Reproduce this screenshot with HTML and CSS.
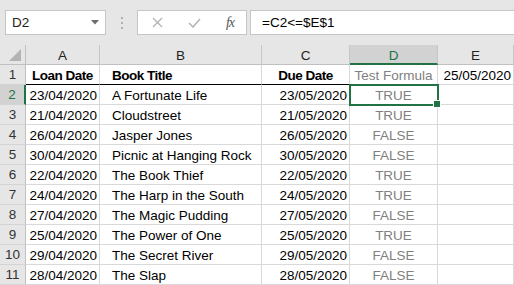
FILE: index.html
```html
<!DOCTYPE html>
<html lang="en">
<head>
    <meta charset="UTF-8">
    <title>Loan Dates</title>
    <link rel="stylesheet" href="styles.css">
</head>
<body>
    <div class="toolbar">
        <div class="name-box">
            <span>D2</span>
            <svg class="caret" width="8" height="5" viewBox="0 0 8 5"><path d="M0 0h8L4 4.5z" fill="#6d6d6d"/></svg>
        </div>
        <div class="grip"><i></i><i></i><i></i></div>
        <div class="fx-buttons">
            <svg width="11" height="11" viewBox="0 0 11 11"><path d="M1 1l9 9M10 1l-9 9" stroke="#b3b3b3" stroke-width="1.3" fill="none"/></svg>
            <svg width="13" height="10" viewBox="0 0 13 10"><path d="M1 5l4 4 7-8" stroke="#b3b3b3" stroke-width="1.5" fill="none"/></svg>
            <span class="fx">fx</span>
        </div>
        <div class="formula">=C2&lt;=$E$1</div>
    </div>

    <div class="sheet">
        <div class="corner"><span class="tri"></span></div>
        <div class="col-head">A</div>
        <div class="col-head">B</div>
        <div class="col-head">C</div>
        <div class="col-head active">D</div>
        <div class="col-head">E</div>

        <div class="row-head">1</div>
        <div class="cell mid bold rule">Loan Date</div>
        <div class="cell text bold rule">Book Title</div>
        <div class="cell mid bold rule">Due Date</div>
        <div class="cell mid gray">Test Formula</div>
        <div class="cell num">25/05/2020</div>
    </div>
    <div class="sheet" id="rows"></div>

    <script>
        const rows = [
            ['23/04/2020', 'A Fortunate Life', '23/05/2020', 'TRUE'],
            ['21/04/2020', 'Cloudstreet', '21/05/2020', 'TRUE'],
            ['26/04/2020', 'Jasper Jones', '26/05/2020', 'FALSE'],
            ['30/04/2020', 'Picnic at Hanging Rock', '30/05/2020', 'FALSE'],
            ['22/04/2020', 'The Book Thief', '22/05/2020', 'TRUE'],
            ['24/04/2020', 'The Harp in the South', '24/05/2020', 'TRUE'],
            ['27/04/2020', 'The Magic Pudding', '27/05/2020', 'FALSE'],
            ['25/04/2020', 'The Power of One', '25/05/2020', 'TRUE'],
            ['29/04/2020', 'The Secret River', '29/05/2020', 'FALSE'],
            ['28/04/2020', 'The Slap', '28/05/2020', 'FALSE']
        ];
        const grid = document.getElementById('rows');
        rows.forEach((r, i) => {
            const n = i + 2;
            grid.insertAdjacentHTML('beforeend', `
                <div class="row-head${n === 2 ? ' active' : ''}">${n}</div>
                <div class="cell num">${r[0]}</div>
                <div class="cell text">${r[1]}</div>
                <div class="cell num">${r[2]}</div>
                <div class="cell mid gray${n === 2 ? ' selected' : ''}">${r[3]}${n === 2 ? '<span class="handle"></span>' : ''}</div>
                <div class="cell"></div>
            `);
        });
    </script>
</body>
</html>
```

FILE: styles.css
```css
body {
    margin: 0;
    font-family: 'Liberation Sans', Arial, sans-serif;
    font-size: 13.5px;
    color: #000;
    background: #fff;
    overflow: hidden;
}
.toolbar {
    display: flex;
    align-items: center;
    height: 45px;
    padding: 0 0 0 5px;
    background: #e6e6e6;
    box-sizing: border-box;
}
.name-box {
    display: flex;
    align-items: center;
    justify-content: space-between;
    width: 101px;
    height: 25px;
    padding: 0 6px 0 6px;
    background: #fff;
    border: 1px solid #c6c6c6;
    box-sizing: border-box;
    color: #222;
}
.grip {
    display: flex;
    flex-direction: column;
    gap: 3px;
    width: 31px;
    align-items: center;
}
.grip i {
    width: 2px;
    height: 2px;
    background: #b0b0b0;
}
.fx-buttons {
    display: flex;
    align-items: center;
    justify-content: space-between;
    width: 110px;
    height: 25px;
    padding: 0 12px 0 14px;
    background: #fff;
    border: 1px solid #c6c6c6;
    box-sizing: border-box;
}
.fx {
    font-family: 'Liberation Serif', serif;
    font-style: italic;
    font-size: 14px;
    color: #555;
    letter-spacing: -1px;
}
.formula {
    flex: 1;
    height: 25px;
    margin-left: 3px;
    padding-left: 11px;
    line-height: 24px;
    background: #fff;
    border: 1px solid #c6c6c6;
    border-right: none;
    box-sizing: border-box;
}
.sheet {
    display: grid;
    grid-template-columns: 26px 74px 162px 88px 88px 75px 1fr;
    grid-auto-rows: 20px;
}
.sheet > div {
    box-sizing: border-box;
    border-right: 1px solid #d9d9d9;
    border-bottom: 1px solid #d9d9d9;
    line-height: 19px;
    white-space: nowrap;
    overflow: hidden;
}
.sheet .row-head:last-child,
.sheet .cell:nth-child(6n) {
    grid-column: 6 / 8;
}
.corner, .col-head, .row-head {
    background: #e6e6e6;
    color: #222;
    text-align: center;
}
.sheet > .corner {
    position: relative;
    border-right: 1px solid #c0c0c0;
    border-bottom: 1px solid #c0c0c0;
}
.tri {
    position: absolute;
    right: 4px;
    bottom: 3px;
    width: 0;
    height: 0;
    border-left: 12px solid transparent;
    border-bottom: 12px solid #b4b4b4;
}
.sheet > .col-head {
    border-right: 1px solid #c6c6c6;
    border-bottom: 1px solid #c0c0c0;
    padding-top: 1px;
}
.sheet > .col-head:nth-child(6) {
    grid-column: 6 / 8;
    text-align: left;
    padding-left: 33px;
}
.sheet > .col-head.active {
    background: #d2d2d2;
    color: #217346;
    border-bottom: 2px solid #217346;
}
.sheet > .row-head {
    border-right: 1px solid #c0c0c0;
    border-bottom: 1px solid #d4d4d4;
    color: #333;
}
.sheet > .row-head.active {
    background: #d2d2d2;
    color: #217346;
    border-right: 2px solid #217346;
}
.cell {
    padding: 1px 2px 0;
}
.num {
    text-align: right;
}
.mid {
    text-align: center;
}
.text {
    padding-left: 12px;
}
.bold {
    font-weight: bold;
    letter-spacing: -0.5px;
}
.gray {
    color: #808080;
}
.sheet > .rule {
    border-bottom: 1px solid #000;
}
.sheet > .selected {
    position: relative;
    overflow: visible;
    outline: 2px solid #217346;
    outline-offset: -1px;
    z-index: 1;
}
.handle {
    position: absolute;
    right: -4px;
    bottom: -4px;
    width: 6px;
    height: 6px;
    background: #217346;
    border: 1px solid #fff;
}
```
